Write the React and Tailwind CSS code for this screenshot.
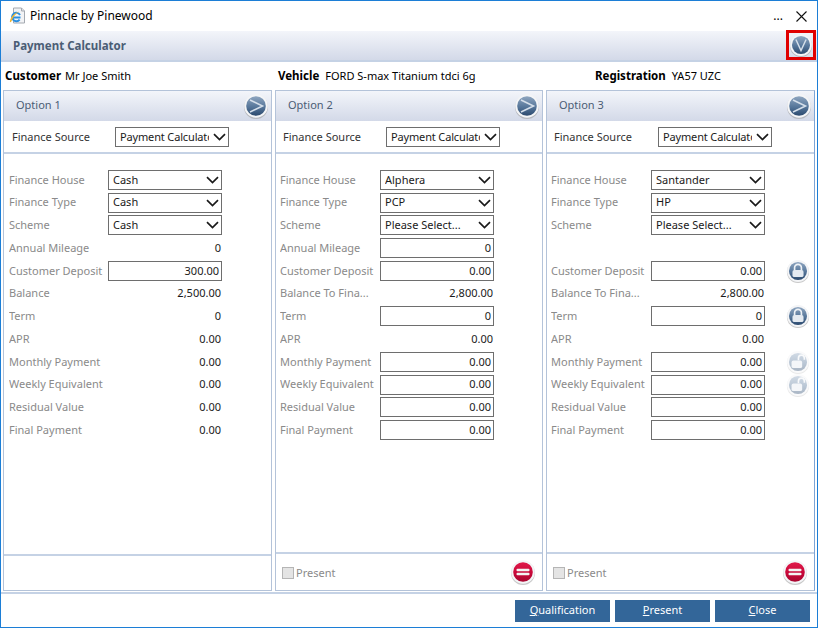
import React from "react";

const font = "font-['Noto_Sans',sans-serif]";

function Chevron() {
  return (
    <svg width="13" height="8" viewBox="0 0 13 8" className="shrink-0">
      <path d="M1 1.2 L6.5 6.5 L12 1.2" fill="none" stroke="#1a1a1a" strokeWidth="1.7" />
    </svg>
  );
}

function Select({ value, tight }) {
  return (
    <div className="w-[114px] h-[20px] shrink-0 border border-[#6e6e6e] bg-white flex items-center justify-between pl-[4px] pr-[2px] text-[#1a1a1a]">
      <span className={`w-[89px] overflow-hidden whitespace-nowrap ${tight ? "tracking-[-0.15px]" : ""}`}>{value}</span>
      <Chevron />
    </div>
  );
}

function Input({ value }) {
  return (
    <div className="w-[114px] h-[20px] shrink-0 border border-[#6e6e6e] bg-white flex items-center justify-end pr-[2px] text-[#1a1a1a]">
      {value}
    </div>
  );
}

function Plain({ value }) {
  return <div className="w-[114px] shrink-0 text-right pr-[1px] text-[#1a1a1a]">{value}</div>;
}

// round glossy button, the glyph inside changes
function RoundBtn({ kind, size = 26, faded }) {
  const red = kind === "minus";
  const id = `g-${kind}-${faded ? "f" : "n"}`;
  return (
    <svg width={size} height={size} viewBox="0 0 26 26" className={`shrink-0 ${faded ? "opacity-40" : ""}`}>
      <defs>
        <linearGradient id={id} x1="0" y1="0" x2="0" y2="1">
          <stop offset="0" stopColor={red ? "#e0194a" : "#8fa6c0"} />
          <stop offset="0.55" stopColor={red ? "#c8083a" : "#56769a"} />
          <stop offset="1" stopColor={red ? "#a8052f" : "#2c4a6e"} />
        </linearGradient>
      </defs>
      <circle cx="13" cy="14" r="12" fill="#9a9a9a" opacity="0.55" />
      <circle cx="13" cy="13" r="11.8" fill="#f4f5f7" />
      <circle cx="13" cy="13" r="9.8" fill={`url(#${id})`} />
      {kind === "next" && <path d="M7 7 L19.5 13 L7 19" fill="none" stroke="#d5dfea" strokeWidth="1.6" />}
      {kind === "down" && <path d="M7.5 7 L13 19 L18.5 7" fill="none" stroke="#d5dfea" strokeWidth="1.6" />}
      {kind === "minus" && (
        <g fill="#f3f3f3">
          <rect x="6.5" y="9.8" width="13" height="2.4" rx="1" />
          <rect x="6.5" y="13.8" width="13" height="2.4" rx="1" />
        </g>
      )}
      {kind === "lock" && (
        <g>
          <path d="M9.3 12 V9.5 a3.7 3.7 0 0 1 7.4 0 V12" fill="none" stroke="#eef2f6" strokeWidth="1.8" />
          <rect x="7" y="12" width="12" height="7.5" rx="2" fill="#e4eaf1" />
        </g>
      )}
      {kind === "unlock" && (
        <g>
          <path d="M13.5 11 V8.7 a3.2 3.2 0 0 1 6.4 0 V10.5" fill="none" stroke="#eef2f6" strokeWidth="1.8" />
          <rect x="6" y="11.5" width="11.5" height="8" rx="2" fill="#e4eaf1" />
        </g>
      )}
    </svg>
  );
}

function Row({ label, type, value, lock, inset }) {
  return (
    <div className="h-[22.75px] flex items-center">
      <div className={`${inset ? "w-[100px]" : "w-[99px]"} shrink-0 text-[#8a8a8a] whitespace-nowrap overflow-hidden`}>{label}</div>
      {type === "select" && <Select value={value} />}
      {type === "input" && <Input value={value} />}
      {type === "plain" && <Plain value={value} />}
      {lock && (
        <div className="ml-[21px] w-[24px] flex justify-center">
          <RoundBtn kind={lock} size={24} faded={lock === "unlock"} />
        </div>
      )}
    </div>
  );
}

function Panel({ title, widthClass, rows, present, lastPanel }) {
  return (
    <div className={`${widthClass} shrink-0 flex flex-col border border-[#b4c3d9] bg-white ${lastPanel ? "border-r-[#7ea5d6]" : ""}`}>
      <div className="h-[30px] shrink-0 flex items-center justify-between pl-[12px] pr-[2px] bg-gradient-to-b from-[#f3f5fa] to-[#d3d9e8] text-[#4b5d75]">
        <span className="pb-[2px]">{title}</span>
        <RoundBtn kind="next" />
      </div>
      <div className={`h-[33px] shrink-0 flex items-center pt-[1px] border-b-2 border-[#c5d2e5] ${present ? "pl-[7px]" : "pl-[8px]"}`}>
        <div className={`${lastPanel ? "w-[104px]" : "w-[103px]"} shrink-0 text-[#333]`}>Finance Source</div>
        <Select value="Payment Calculator" tight />
      </div>
      <div className={`flex-1 pt-[14.4px] ${present ? "pl-[4px]" : "pl-[5px]"}`}>
        {rows.map((r, i) => (
          <Row key={i} {...r} inset={present} />
        ))}
      </div>
      <div className={`${present ? "h-[38px]" : "h-[36px]"} shrink-0 border-t-2 border-[#c5d2e5] flex items-center justify-between pl-[6px] pr-[6px]`}>
        {present && (
          <>
            <div className="flex items-center gap-[2px] pt-[2px] text-[#8a8a8a]">
              <div className="w-[12px] h-[12px] bg-[#e4e4e4] border border-[#b5b5b5]" />
              Present
            </div>
            <RoundBtn kind="minus" />
          </>
        )}
      </div>
    </div>
  );
}

function Btn({ label, u }) {
  return (
    <button className="w-[95px] h-[22px] bg-[#336699] text-white text-center">
      <u>{u}</u>{label}
    </button>
  );
}

const option1 = [
  { label: "Finance House", type: "select", value: "Cash" },
  { label: "Finance Type", type: "select", value: "Cash" },
  { label: "Scheme", type: "select", value: "Cash" },
  { label: "Annual Mileage", type: "plain", value: "0" },
  { label: "Customer Deposit", type: "input", value: "300.00" },
  { label: "Balance", type: "plain", value: "2,500.00" },
  { label: "Term", type: "plain", value: "0" },
  { label: "APR", type: "plain", value: "0.00" },
  { label: "Monthly Payment", type: "plain", value: "0.00" },
  { label: "Weekly Equivalent", type: "plain", value: "0.00" },
  { label: "Residual Value", type: "plain", value: "0.00" },
  { label: "Final Payment", type: "plain", value: "0.00" },
];

const option2 = [
  { label: "Finance House", type: "select", value: "Alphera" },
  { label: "Finance Type", type: "select", value: "PCP" },
  { label: "Scheme", type: "select", value: "Please Select..." },
  { label: "Annual Mileage", type: "input", value: "0" },
  { label: "Customer Deposit", type: "input", value: "0.00" },
  { label: "Balance To Fina...", type: "plain", value: "2,800.00" },
  { label: "Term", type: "input", value: "0" },
  { label: "APR", type: "plain", value: "0.00" },
  { label: "Monthly Payment", type: "input", value: "0.00" },
  { label: "Weekly Equivalent", type: "input", value: "0.00" },
  { label: "Residual Value", type: "input", value: "0.00" },
  { label: "Final Payment", type: "input", value: "0.00" },
];

const option3 = [
  { label: "Finance House", type: "select", value: "Santander" },
  { label: "Finance Type", type: "select", value: "HP" },
  { label: "Scheme", type: "select", value: "Please Select..." },
  { label: "" },
  { label: "Customer Deposit", type: "input", value: "0.00", lock: "lock" },
  { label: "Balance To Fina...", type: "plain", value: "2,800.00" },
  { label: "Term", type: "input", value: "0", lock: "lock" },
  { label: "APR", type: "plain", value: "0.00" },
  { label: "Monthly Payment", type: "input", value: "0.00", lock: "unlock" },
  { label: "Weekly Equivalent", type: "input", value: "0.00", lock: "unlock" },
  { label: "Residual Value", type: "input", value: "0.00" },
  { label: "Final Payment", type: "input", value: "0.00" },
];

export default function App() {
  return (
    <div className={`w-[818px] h-[628px] flex flex-col bg-white border border-[#1c7ed6] text-[11px] ${font}`}>
      <div className="h-[30px] shrink-0 flex items-center justify-between pl-[8px] pr-[10px] text-[12px] text-black">
        <div className="flex items-center gap-[3px]">
          <svg width="18" height="18" viewBox="0 0 18 18">
            <path d="M4.5 1 H12.5 L15.5 4 V16 H4.5 Z" fill="#f2f3f5" stroke="#a4a9b0" />
            <path d="M12.5 1 V4 H15.5" fill="#dfe2e7" stroke="#a4a9b0" />
            <path d="M11.5 10.5 H3.5 M11 8 A4.2 4.2 0 1 0 10.6 12.6" fill="none" stroke="#2a8fe0" strokeWidth="2" />
            <path d="M0.8 14.5 C1.5 10.5 5 6 10 4.5 C6.5 7 3.5 10.5 2.6 14 C2.3 15.3 1 15.6 0.8 14.5 Z" fill="#f2b632" />
          </svg>
          <span>Pinnacle by Pinewood</span>
        </div>
        <div className="flex items-center gap-[13px]">
          <span className="leading-none">...</span>
          <svg width="11" height="11" viewBox="0 0 11 11">
            <path d="M0.5 0.5 L10.5 10.5 M10.5 0.5 L0.5 10.5" stroke="#111" strokeWidth="1.1" />
          </svg>
        </div>
      </div>

      <div className="h-[29px] shrink-0 flex items-center justify-between pl-[12px] pr-[1px] bg-gradient-to-b from-[#f3f5fa] to-[#d3d9e8]">
        <span className="font-bold text-[11.5px] text-[#4b5d75]">Payment Calculator</span>
        <div className="w-[30px] h-[30px] -mt-[1px] border-[3px] border-[#e00000] flex items-center justify-center">
          <RoundBtn kind="down" size={24} />
        </div>
      </div>
      <div className="h-[2px] shrink-0 bg-[#c5d2e5]" />

      <div className="h-[28px] shrink-0 flex items-center text-black">
        <div className="w-[277px] pl-[4px]"><b className="mr-[4px] text-[11.5px]">Customer</b>Mr Joe Smith</div>
        <div className="w-[317px]"><b className="mr-[6px] text-[11.5px]">Vehicle</b>FORD S-max Titanium tdci 6g</div>
        <div><b className="mr-[6px] text-[11.5px]">Registration</b>YA57 UZC</div>
      </div>

      <div className="flex-1 min-h-0 flex gap-[3px] pl-[2px]">
        <Panel title="Option 1" widthClass="w-[269px]" rows={option1} />
        <Panel title="Option 2" widthClass="w-[268px]" rows={option2} present />
        <Panel title="Option 3" widthClass="w-[269px]" rows={option3} present lastPanel />
      </div>

      <div className="h-[2px] mt-[1px] shrink-0 bg-[#c5d2e5]" />
      <div className="h-[33px] shrink-0 flex items-center justify-end gap-[5px] pr-[7px]">
        <Btn u="Q" label="ualification" />
        <Btn u="P" label="resent" />
        <Btn u="C" label="lose" />
      </div>
    </div>
  );
}
